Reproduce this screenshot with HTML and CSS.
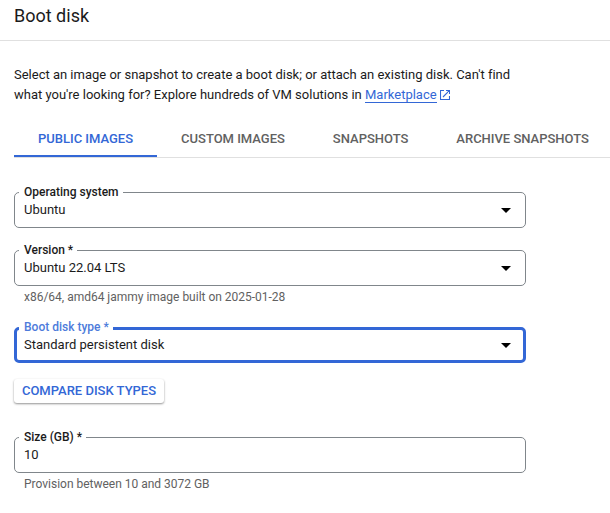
FILE: index.html
```html
<!DOCTYPE html>
<html lang="en">
<head>
<meta charset="utf-8">
<title>Boot disk</title>
<link rel="stylesheet" href="styles.css">
</head>
<body>
<header class="header"><h1 class="title">Boot disk</h1></header>
<main class="content">
  <p class="intro">Select an image or snapshot to create a boot disk; or attach an existing disk. Can't find<br>what you're looking for? Explore hundreds of VM solutions in <a class="link" href="#">Marketplace</a><svg class="external" viewBox="0 0 10 10"><path d="M4 .5H.5V9.5H9.5V6M6 .5H9.5V4M9.3 .7L3 7"/></svg></p>
  <nav class="tabs">
    <a class="tab tab-active">PUBLIC IMAGES</a>
    <a class="tab">CUSTOM IMAGES</a>
    <a class="tab">SNAPSHOTS</a>
    <a class="tab">ARCHIVE SNAPSHOTS</a>
  </nav>
  <div class="field">
    <span class="label">Operating system</span>
    <span class="value">Ubuntu</span>
    <svg class="arrow" viewBox="0 0 10 5"><path d="M0 0H10L5 5Z"/></svg>
  </div>
  <div class="field field-version">
    <span class="label">Version *</span>
    <span class="value">Ubuntu 22.04 LTS</span>
    <svg class="arrow" viewBox="0 0 10 5"><path d="M0 0H10L5 5Z"/></svg>
  </div>
  <p class="hint">x86/64, amd64 jammy image built on 2025-01-28</p>
  <div class="field field-focused">
    <span class="label">Boot disk type *</span>
    <span class="value">Standard persistent disk</span>
    <svg class="arrow" viewBox="0 0 10 5"><path d="M0 0H10L5 5Z"/></svg>
  </div>
  <button class="compare">COMPARE DISK TYPES</button>
  <div class="field field-size">
    <span class="label">Size (GB) *</span>
    <span class="value">10</span>
  </div>
  <p class="hint">Provision between 10 and 3072 GB</p>
</main>
</body>
</html>
```
FILE: styles.css
```css
* { box-sizing: border-box; }
body {
  margin: 0;
  height: 513px;
  overflow: hidden;
  background: #fff;
  color: #1b1b1b;
  font: 400 13px/20px Roboto, sans-serif;
}
.header {
  height: 41px;
  padding: 4px 14px 0;
  border-bottom: 1px solid #e0e0e0;
}
.title {
  margin: 0;
  font-size: 18px;
  font-weight: 400;
  line-height: 24px;
}
.content { padding: 24px 0 0 14px; }
.intro { margin: 0; white-space: nowrap; letter-spacing: -0.005px; }
.link {
  display: inline-block;
  height: 18px;
  line-height: 20px;
  color: #3367d6;
  text-decoration: none;
  border-bottom: 1px solid #3367d6;
}
.external {
  width: 10px;
  height: 10px;
  margin-left: 3px;
  vertical-align: -1px;
  fill: none;
  stroke: #3367d6;
  stroke-width: 1.1;
}
.tabs {
  display: flex;
  height: 37px;
  margin-top: 16px;
  border-bottom: 1px solid #e0e0e0;
}
.tab {
  flex: none;
  height: 36px;
  padding: 8px 24px 0;
  color: #616161;
  font-weight: 500;
  letter-spacing: -0.01px;
  white-space: nowrap;
}
.tab-active {
  color: #3367d6;
  border-bottom: 2px solid #3367d6;
}
.field {
  position: relative;
  display: flex;
  align-items: center;
  justify-content: space-between;
  width: 512px;
  height: 36px;
  margin-top: 34px;
  padding: 0 14px 0 9px;
  border: 1px solid #80868b;
  border-radius: 5px;
}
.label {
  position: absolute;
  left: 4px;
  top: -9px;
  padding: 0 4px 0 5px;
  background: #fff;
  font-size: 12px;
  font-weight: 500;
  line-height: 16px;
}
.arrow { width: 10px; height: 5px; fill: #000; }
.field-version { margin-top: 22px; }
.hint {
  margin: 1px 0 0 10px;
  color: #616161;
  font-size: 12px;
  letter-spacing: -0.01px;
}
.field-focused {
  margin-top: 20px;
  padding: 0 12px 0 7px;
  border: 3px solid #3367d6;
}
.field-focused .label { left: 2px; top: -11px; color: #4d7bdb; }
.compare {
  display: block;
  width: 150px;
  height: 24px;
  margin-top: 16px;
  padding: 0;
  border: 0;
  border-radius: 3px;
  background: #fff;
  color: #3367d6;
  box-shadow: 0 1px 2px rgba(0, 0, 0, .35), 0 1px 3px rgba(0, 0, 0, .1);
  font: 500 13px/24px Roboto, sans-serif;
}
.field-size { margin-top: 34px; }
```
